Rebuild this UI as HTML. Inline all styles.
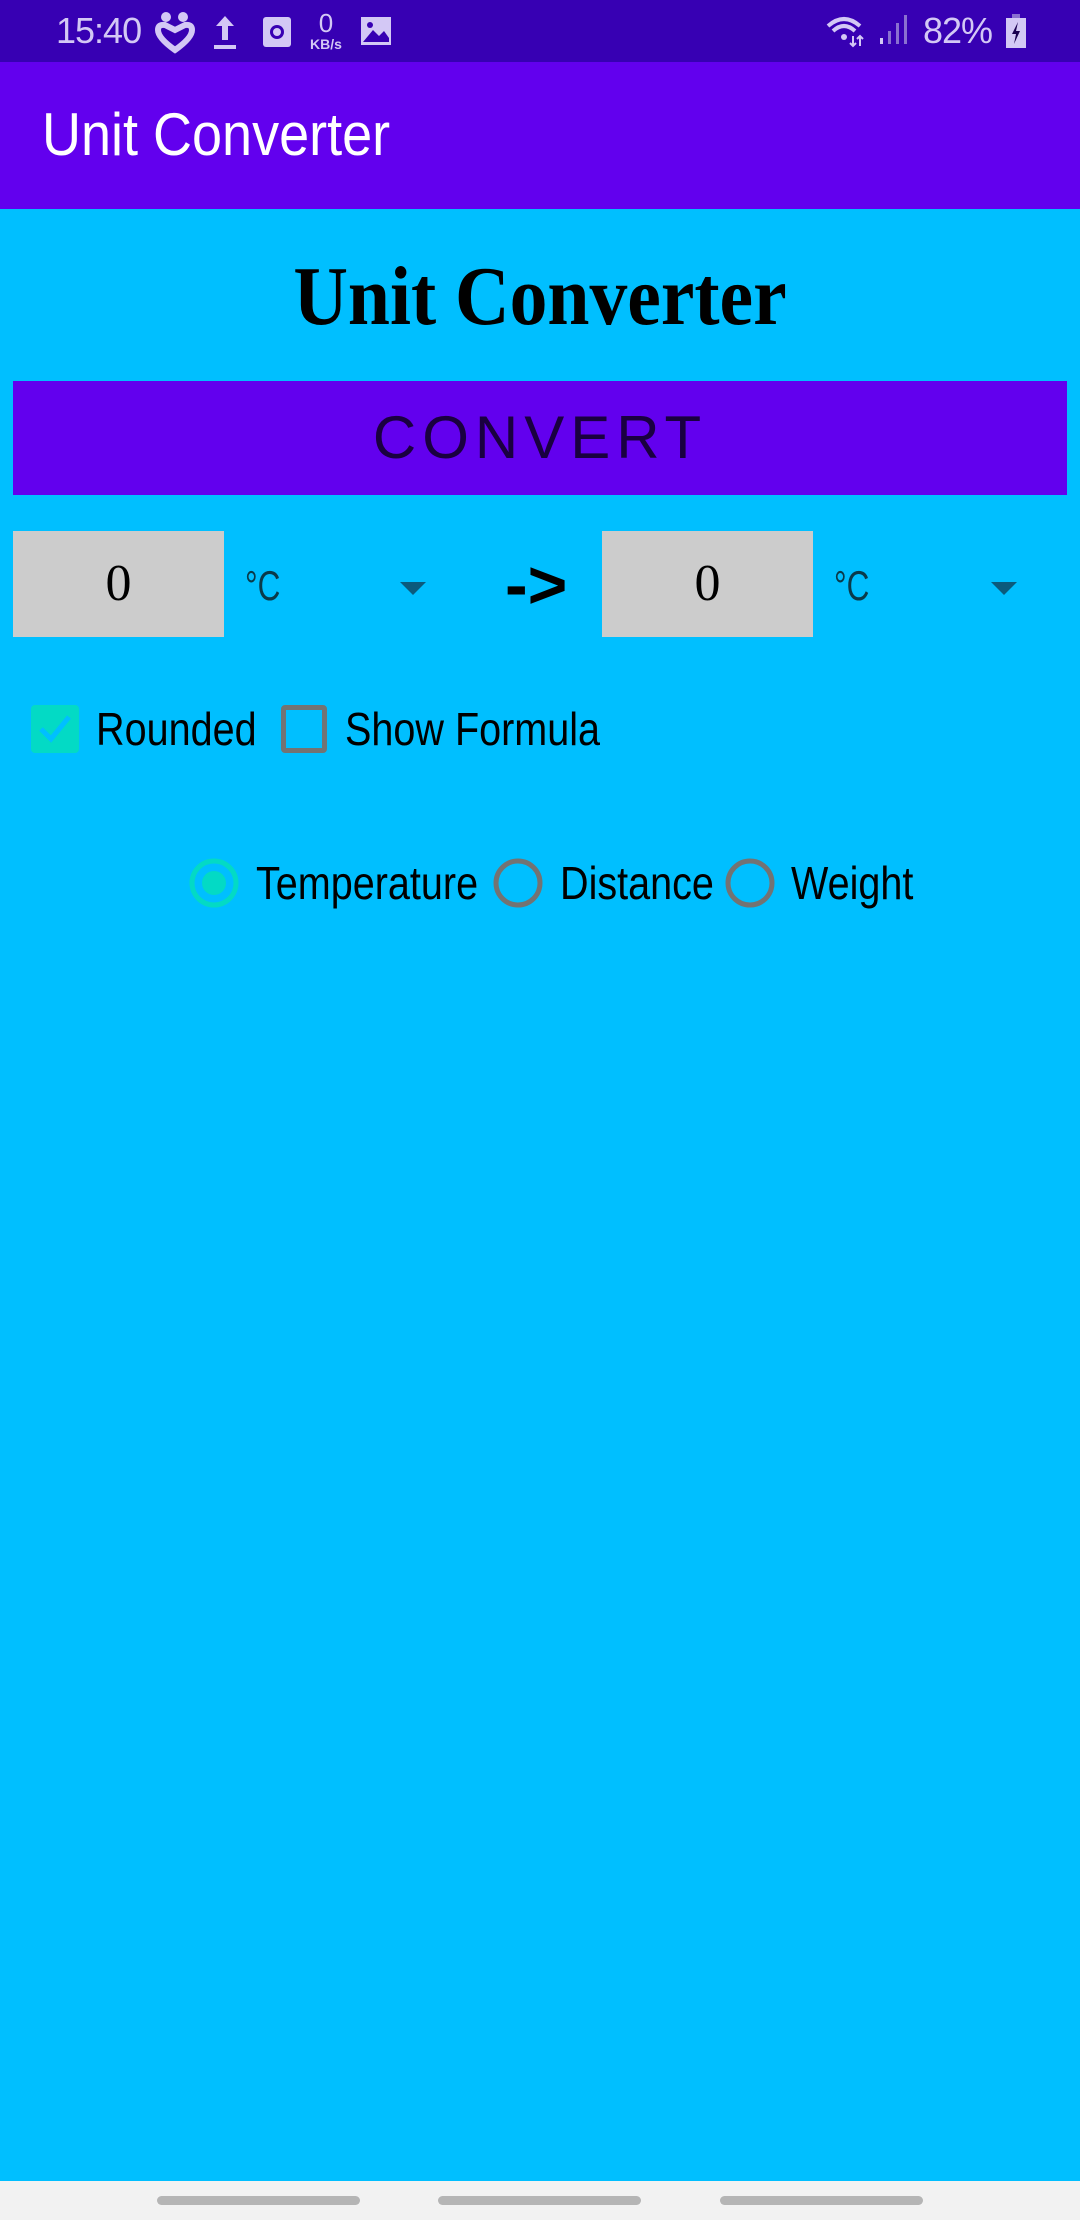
<!DOCTYPE html>
<html><head><meta charset="utf-8">
<style>
*{margin:0;padding:0;box-sizing:border-box}
html,body{width:1080px;height:2220px;overflow:hidden;background:#00BFFF;font-family:"Liberation Sans",sans-serif}
.abs{position:absolute}
.sb{left:0;top:0;width:1080px;height:62px;background:#3700B3;color:#D3C8F5}
.ab{left:0;top:62px;width:1080px;height:147px;background:#6200EE}
.hand{font-family:"Liberation Sans Narrow","Liberation Sans",sans-serif;transform-origin:0 50%;white-space:nowrap}
.title{left:0;top:252px;width:1080px;text-align:center;font-family:"Liberation Serif",serif;font-weight:bold;font-size:84px;line-height:90px;color:#000;transform:scaleX(0.9)}
.btn{left:13px;top:381px;width:1054px;height:114px;background:#6200EE;text-align:center;line-height:114px;font-size:60px;letter-spacing:6px;color:#1a0040}
.box{top:531px;width:211px;height:106px;background:#CCCCCC;text-align:center;line-height:106px;font-family:"Liberation Serif",serif;font-size:52px;color:#000}
.deg{top:562px;font-size:42px;color:#0a3a4a;transform:scaleX(0.75)}
.tri{width:0;height:0;border-left:13px solid transparent;border-right:13px solid transparent;border-top:13px solid #0B5A7C}
.lbl{font-size:46px;color:#000;line-height:50px;transform:scaleX(0.86)}
.nav{left:0;top:2181px;width:1080px;height:39px;background:#F2F2F2}
.pill{top:2196px;height:9px;width:203px;border-radius:5px;background:#B5B5B5}
</style></head><body>
<div class="abs sb">
  <div class="abs" style="left:56px;top:10px;font-size:36px;line-height:42px;letter-spacing:-1px">15:40</div>
  <svg class="abs" style="left:155px;top:10px" width="40" height="44" viewBox="0 0 40 44"><circle cx="11" cy="7" r="5" fill="#D3C8F5"/><circle cx="28" cy="7" r="5" fill="#D3C8F5"/><path d="M3 20 Q3 14 10 15 L20 20 L30 15 Q37 14 37 20 Q37 28 20 40 Q3 28 3 20Z" fill="none" stroke="#D3C8F5" stroke-width="6"/></svg>
  <svg class="abs" style="left:212px;top:14px" width="26" height="36" viewBox="0 0 26 36"><path d="M13 2 L4 12 H10 V26 H16 V12 H22Z" fill="#D3C8F5"/><rect x="2" y="31" width="22" height="4" fill="#D3C8F5"/></svg>
  <svg class="abs" style="left:262px;top:16px" width="30" height="32" viewBox="0 0 30 32"><rect x="1" y="1" width="28" height="30" rx="3" fill="#D3C8F5"/><circle cx="15" cy="16" r="7" fill="#3700B3"/><circle cx="15" cy="16" r="4" fill="#D3C8F5"/></svg>
  <div class="abs" style="left:306px;top:10px;width:40px;text-align:center;font-size:26px;line-height:26px">0</div>
  <div class="abs" style="left:304px;top:36px;width:44px;text-align:center;font-size:14px;font-weight:bold">KB/s</div>
  <svg class="abs" style="left:360px;top:16px" width="32" height="30" viewBox="0 0 32 30"><rect x="1" y="1" width="30" height="28" fill="#D3C8F5"/><circle cx="10" cy="9" r="3" fill="#3700B3"/><path d="M3 26 L13 14 L19 20 L24 15 L29 22 V26Z" fill="#3700B3"/></svg>
  <svg class="abs" style="left:826px;top:14px" width="40" height="34" viewBox="0 0 40 34"><path d="M2 12 Q18 -2 34 12" fill="none" stroke="#D3C8F5" stroke-width="4"/><path d="M7 17 Q18 7 29 17" fill="none" stroke="#D3C8F5" stroke-width="4"/><circle cx="18" cy="23" r="3" fill="#D3C8F5"/><path d="M27 22 V32 M24 29 L27 32 L30 29 M34 32 V22 M31 25 L34 22 L37 25" stroke="#D3C8F5" stroke-width="2" fill="none"/></svg>
  <svg class="abs" style="left:878px;top:14px" width="30" height="32" viewBox="0 0 30 32"><rect x="2" y="24" width="3" height="6" fill="#D3C8F5"/><rect x="10" y="17" width="3" height="13" fill="#8a70d0"/><rect x="18" y="9" width="3" height="21" fill="#8a70d0"/><rect x="26" y="1" width="3" height="29" fill="#8a70d0"/></svg>
  <div class="abs" style="left:923px;top:10px;font-size:36px;line-height:42px;letter-spacing:-1px">82%</div>
  <svg class="abs" style="left:1005px;top:14px" width="22" height="36" viewBox="0 0 22 36"><rect x="7" y="0" width="8" height="4" fill="#8a70d0"/><rect x="1" y="4" width="20" height="30" fill="#D3C8F5"/><path d="M13 8 L7 20 H11 L9 30 L15 17 H11Z" fill="#1a0050"/></svg>
</div>
<div class="abs ab"><div class="abs hand" style="left:42px;top:38px;font-size:60px;line-height:70px;color:#fff;transform:scaleX(0.9)">Unit Converter</div></div>
<div class="abs title">Unit Converter</div>
<div class="abs btn">CONVERT</div>
<div class="abs box" style="left:13px">0</div>
<div class="abs deg hand" style="left:245px">°C</div>
<div class="abs tri" style="left:400px;top:582px"></div>
<div class="abs" style="left:505px;top:548px;font-size:68px;font-weight:bold;line-height:74px">-&gt;</div>
<div class="abs box" style="left:602px">0</div>
<div class="abs deg hand" style="left:834px">°C</div>
<div class="abs tri" style="left:991px;top:582px"></div>
<svg class="abs" style="left:31px;top:705px" width="48" height="48" viewBox="0 0 48 48"><rect x="0" y="0" width="48" height="48" rx="4" fill="#03DAC5"/><path d="M10 24 L20 34 L38 12" fill="none" stroke="#00BFFF" stroke-width="5"/></svg>
<div class="abs lbl hand" style="left:96px;top:704px">Rounded</div>
<div class="abs" style="left:281px;top:705px;width:46px;height:48px;border:5px solid #737373;border-radius:4px"></div>
<div class="abs lbl hand" style="left:345px;top:704px">Show Formula</div>
<svg class="abs" style="left:188px;top:857px" width="52" height="52" viewBox="0 0 52 52"><circle cx="26" cy="26" r="22" fill="none" stroke="#03DAC5" stroke-width="5"/><circle cx="26" cy="26" r="12" fill="#03DAC5"/></svg>
<div class="abs lbl hand" style="left:256px;top:858px">Temperature</div>
<svg class="abs" style="left:492px;top:857px" width="52" height="52" viewBox="0 0 52 52"><circle cx="26" cy="26" r="22" fill="none" stroke="#737373" stroke-width="5"/></svg>
<div class="abs lbl hand" style="left:560px;top:858px">Distance</div>
<svg class="abs" style="left:724px;top:857px" width="52" height="52" viewBox="0 0 52 52"><circle cx="26" cy="26" r="22" fill="none" stroke="#737373" stroke-width="5"/></svg>
<div class="abs lbl hand" style="left:791px;top:858px">Weight</div>
<div class="abs nav"></div>
<div class="abs pill" style="left:157px"></div>
<div class="abs pill" style="left:438px"></div>
<div class="abs pill" style="left:720px"></div>
</body></html>
